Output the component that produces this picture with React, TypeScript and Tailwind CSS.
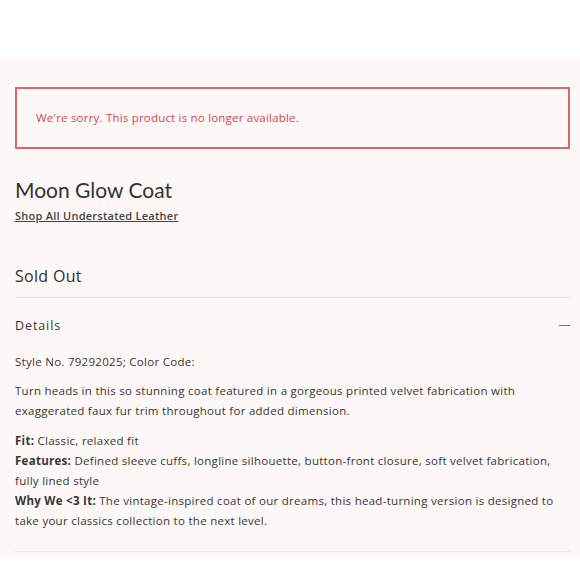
import React from "react";

export default function App() {
  return (
    <div className="w-[580px] h-[580px] bg-white font-['Open_Sans',sans-serif] text-[#363636]">
      <div className="h-[59px]" />
      <div className="bg-[#fdf8f7] pl-[15px] pr-[10px] pt-[28px] pb-[4px]">
        {/* Notice */}
        <div className="border-2 border-[#d8686b] h-[62px] flex items-center px-[19px]">
          <p className="text-[11.5px] tracking-[0.2px] text-[#d8434b]">
            We're sorry. This product is no longer available.
          </p>
        </div>

        {/* Title */}
        <h1 className="mt-[28px] font-['Lato',sans-serif] text-[21px] leading-[26px] text-[#333]">
          Moon Glow Coat
        </h1>
        <a className="block mt-[5px] text-[11px] font-semibold underline tracking-[0.25px] text-[#444]">
          Shop All Understated Leather
        </a>

        {/* Price */}
        <p className="mt-[39px] text-[16px] tracking-[0.3px] text-[#2f2f2f]">Sold Out</p>
        <div className="mt-[9px] h-px bg-[#ece6e4]" />

        {/* Details */}
        <div className="flex justify-between items-center mt-[19px]">
          <span className="text-[12.5px] tracking-[0.9px]">Details</span>
          <span className="w-[11px] h-px bg-[#777]" />
        </div>

        <div className="mt-[17px] text-[11.5px] leading-[20px] tracking-[0.28px]">
          <p>Style No. 79292025; Color Code:</p>
          <p className="mt-[9px]">
            Turn heads in this so stunning coat featured in a gorgeous printed velvet fabrication with exaggerated faux fur trim throughout for added dimension.
          </p>
          <p className="mt-[10px]">
            <b>Fit:</b> Classic, relaxed fit
          </p>
          <p>
            <b>Features:</b> Defined sleeve cuffs, longline silhouette, button-front closure, soft velvet fabrication, fully lined style
          </p>
          <p>
            <b>Why We &lt;3 It:</b> The vintage-inspired coat of our dreams, this head-turning version is designed to take your classics collection to the next level.
          </p>
        </div>
        <div className="mt-[20px] h-px bg-[#ece6e4]" />
      </div>
    </div>
  );
}
